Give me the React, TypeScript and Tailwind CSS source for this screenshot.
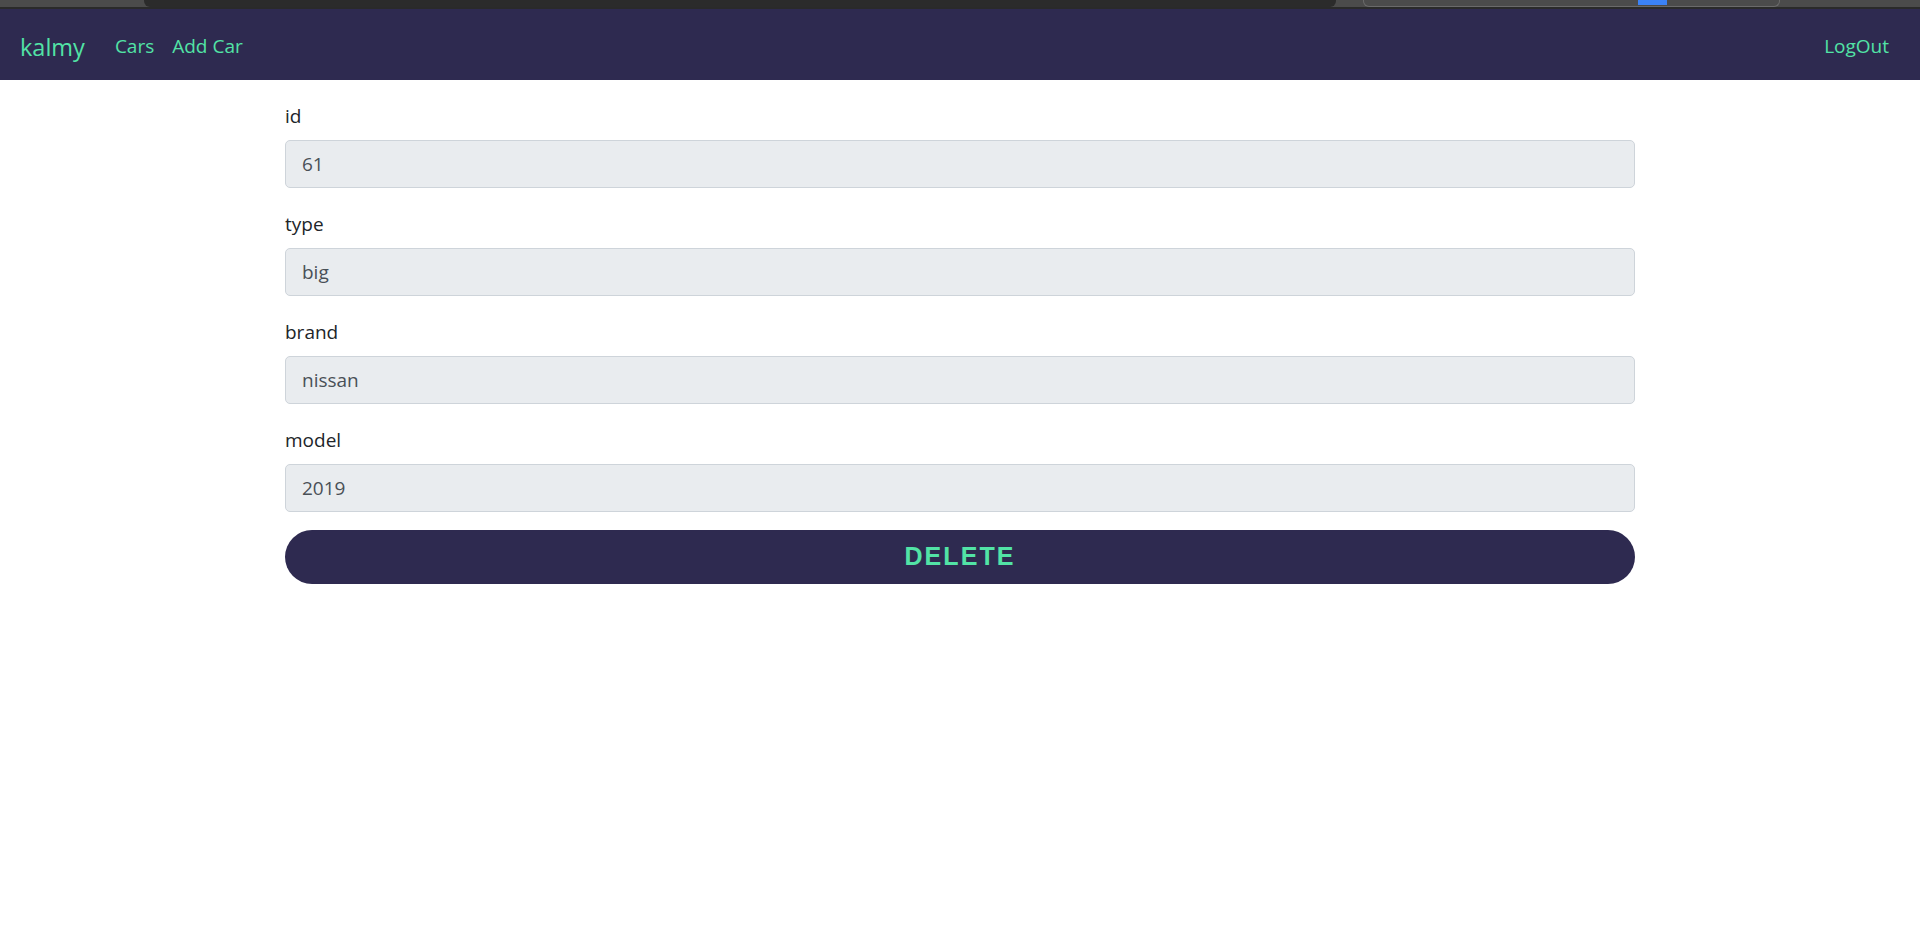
import React from "react";

const fields = [
  { label: "id", value: "61" },
  { label: "type", value: "big" },
  { label: "brand", value: "nissan" },
  { label: "model", value: "2019" },
];

export default function App() {
  return (
    <div className="min-h-[944px] bg-white" style={{ fontFamily: '"Open Sans", "Noto Sans", sans-serif' }}>
      {/* browser chrome remnant */}
      <div className="relative h-[9px] bg-[#4b4b4b] border-b-2 border-[#2a2a2a]">
        <div className="absolute left-[144px] top-0 h-[7px] w-[1192px] rounded-b-[6px] bg-[#2b2b2b]" />
        <div className="absolute left-[1363px] top-0 h-[7px] w-[417px] rounded-b-[6px] border border-t-0 border-[#6a6a6a]" />
        <div className="absolute left-[1638px] top-0 h-[5px] w-[29px] bg-[#3b82f6]" />
      </div>
      <nav className="flex h-[71px] items-center justify-between bg-[#2e2a50] pl-[20px] pr-[31px] pt-[4px] text-[#52e3a6]">
        <div className="flex items-center">
          <span className="mr-[30px] text-[23.5px] leading-[36px]">kalmy</span>
          <span className="mr-[18px] text-[19px]">Cars</span>
          <span className="text-[19px]">Add Car</span>
        </div>
        <span className="text-[19px]">LogOut</span>
      </nav>
      <div className="mx-auto mt-[20px] w-[1350px]">
        {fields.map((f) => (
          <div key={f.label} className="mb-[20px]">
            <div className="mb-[10px] h-[30px] pt-[1px] text-[19px] leading-[30px] text-[#212529]">{f.label}</div>
            <div className="flex h-[48px] items-center rounded-[5px] border border-[#ced4da] bg-[#e9ecef] px-[16px] text-[19px] text-[#495057]">
              {f.value}
            </div>
          </div>
        ))}
        <button
          className="mt-[-2px] flex h-[54px] w-full items-center justify-center rounded-full bg-[#2e2a50] text-[25px] font-bold tracking-[2.1px] text-[#52e3a6]"
          style={{ fontFamily: '"Liberation Sans", Arial, sans-serif' }}
        >
          DELETE
        </button>
      </div>
    </div>
  );
}
